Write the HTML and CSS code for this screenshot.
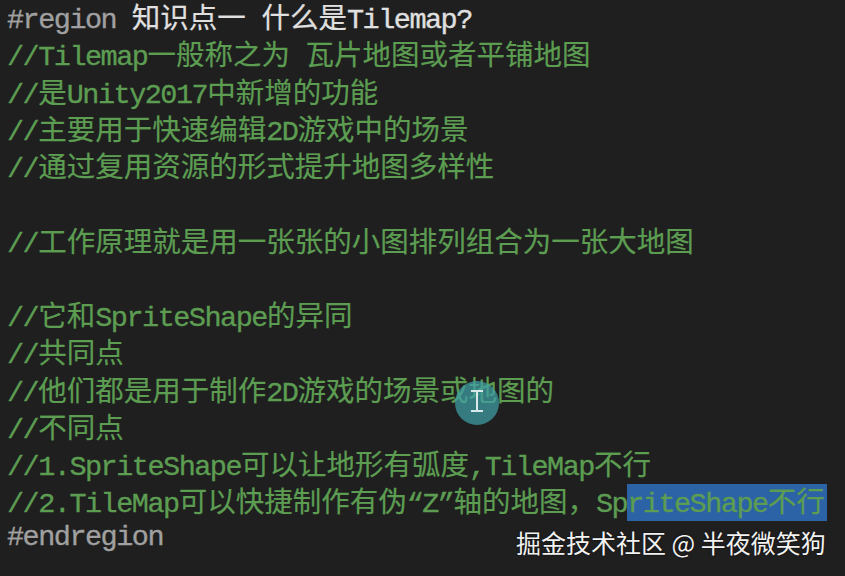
FILE: index.html
```html
<!DOCTYPE html>
<html lang="zh">
<head>
<meta charset="utf-8">
<link rel="stylesheet" href="styles.css">
</head>
<body>
<div class="editor">
  <div class="code">
    <div class="line"><span class="kw">#region </span><span class="title"><span class="z">知识点一</span> <span class="z">什么是</span>Tilemap?</span></div>
    <div class="line cm">//Tilemap<span class="z">一般称之为</span> <span class="z">瓦片地图或者平铺地图</span></div>
    <div class="line cm">//<span class="z">是</span>Unity2017<span class="z">中新增的功能</span></div>
    <div class="line cm">//<span class="z">主要用于快速编辑</span>2D<span class="z">游戏中的场景</span></div>
    <div class="line cm">//<span class="z">通过复用资源的形式提升地图多样性</span></div>
    <div class="line"></div>
    <div class="line cm">//<span class="z">工作原理就是用一张张的小图排列组合为一张大地图</span></div>
    <div class="line"></div>
    <div class="line cm">//<span class="z">它和</span>SpriteShape<span class="z">的异同</span></div>
    <div class="line cm">//<span class="z">共同点</span></div>
    <div class="line cm">//<span class="z">他们都是用于制作</span>2D<span class="z">游戏的场景或地图的</span></div>
    <div class="line cm">//<span class="z">不同点</span></div>
    <div class="line cm">//1.SpriteShape<span class="z">可以让地形有弧度</span>,TileMap<span class="z">不行</span></div>
    <div class="line cm">//2.TileMap<span class="z">可以快捷制作有伪</span>“Z”<span class="z">轴的地图，</span>Sp<span class="sel">riteShape<span class="z">不行</span></span></div>
    <div class="line kw">#endregion</div>
  </div>
  <div class="cursor"><span class="ibeam"></span></div>
  <div class="watermark">掘金技术社区 @ 半夜微笑狗</div>
</div>
</body>
</html>
```
FILE: styles.css
```css
html, body {
  margin: 0;
  padding: 0;
  background: #1f1f1f;
}
.editor {
  position: relative;
  width: 845px;
  height: 576px;
  overflow: hidden;
  background: #1f1f1f;
}
.code {
  margin-top: -3px;
  padding-left: 7px;
  font-family: "Liberation Mono", "Noto Sans CJK SC", monospace;
  font-size: 28.5px;
  letter-spacing: -1.5px;
  line-height: 37.25px;
  -webkit-text-stroke: 0.35px currentColor;
}
.line {
  height: 37.25px;
  white-space: pre;
}
.z {
  font-family: "Noto Sans CJK SC", sans-serif;
  font-size: 28.5px;
  letter-spacing: 0;
  line-height: 37.25px;
  -webkit-text-stroke: 0.2px currentColor;
}
.kw {
  color: #a0a0a0;
}
.title {
  color: #e0e0e0;
}
.cm {
  color: #5c9d52;
}
.sel {
  background: #2c62a6;
  padding: 4px 2px 0 0;
}
.cursor {
  position: absolute;
  left: 455px;
  top: 381px;
  width: 44px;
  height: 44px;
  border-radius: 50%;
  background: rgba(62, 160, 166, 0.72);
}
.ibeam {
  position: absolute;
  left: 21px;
  top: 9px;
  width: 2px;
  height: 22px;
  background: #d8e8e8;
}
.ibeam::before, .ibeam::after {
  content: "";
  position: absolute;
  left: -5px;
  width: 12px;
  height: 2px;
  background: #d8e8e8;
}
.ibeam::before { top: 0; }
.ibeam::after { bottom: 0; }
.watermark {
  position: absolute;
  left: 516px;
  top: 524px;
  font-family: "Noto Sans CJK SC", sans-serif;
  font-size: 25px;
  line-height: 36px;
  color: #f2f2f2;
  text-shadow: 0 0 2px rgba(0,0,0,0.8);
  white-space: pre;
}
```
